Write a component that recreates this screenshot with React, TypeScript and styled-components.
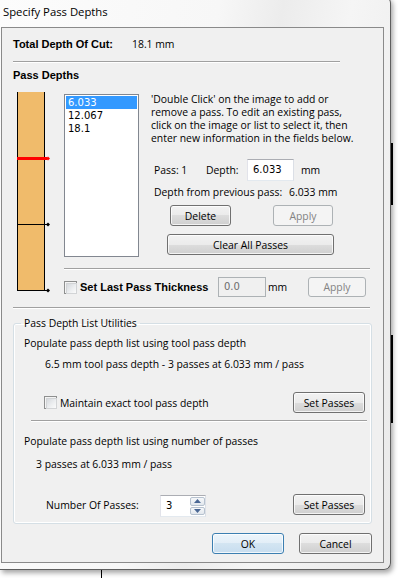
import React from "react";
import styled, { createGlobalStyle } from "styled-components";

const GlobalStyle = createGlobalStyle`
  html, body { margin: 0; padding: 0; background: #ffffff; overflow: hidden; }
  #root { width: 398px; height: 578px; }
  * { box-sizing: border-box; }
`;

const UI = `"Open Sans", "Noto Sans", sans-serif`;
const TAHOMA = `"DejaVu Sans", "Liberation Sans", sans-serif`;
const BOLD = `"Liberation Sans", Arial, sans-serif`;

const Desktop = styled.div`
  position: relative;
  width: 398px;
  height: 578px;
  overflow: hidden;
  background: #ffffff;
`;

const BackdropLine = styled.div<{ $x: number; $y: number; $w: number; $h: number }>`
  position: absolute;
  left: ${(p) => p.$x}px;
  top: ${(p) => p.$y}px;
  width: ${(p) => p.$w}px;
  height: ${(p) => p.$h}px;
  background: #000;
`;

const Window = styled.div`
  position: relative;
  z-index: 1;
  width: 391px;
  margin-top: -4px;
  padding: 0 6px 6px 1px;
  border-top: 1px solid #6b6b6b;
  border-right: 1px solid #5e5e5e;
  border-bottom: 1px solid #5e5e5e;
  border-radius: 0 7px 7px 0;
  background: linear-gradient(100deg, #fcfcfc 0%, #f7f7f7 45%, #ececec 58%, #f5f5f5 72%, #e9e9e9 100%);
  box-shadow: 2px 3px 5px rgba(0, 0, 0, 0.35);
`;

const TitleBar = styled.div`
  height: 30px;
  padding: 7px 0 0 2px;
  font-family: ${UI};
  font-size: 11.3px;
  line-height: 16px;
  color: #000;
`;

const Panel = styled.div`
  height: 536px;
  border: 1px solid #8a8a8a;
  background: #f0f0f0;
  padding: 9px 11px 0 11px;
  display: flex;
  flex-direction: column;
  font-family: ${UI};
  font-size: 10.4px;
  color: #000;
`;

const TotalRow = styled.div`
  display: flex;
  align-items: center;
  height: 14px;
  line-height: 14px;
`;

const BoldLabel = styled.span<{ $width?: number }>`
  font-family: ${BOLD};
  font-weight: bold;
  font-size: 11px;
  line-height: 14px;
  white-space: nowrap;
  ${(p) => (p.$width ? `width: ${p.$width}px; flex: none;` : "")}
`;

const Text = styled.span<{ $width?: number }>`
  line-height: 14px;
  white-space: nowrap;
  ${(p) => (p.$width ? `width: ${p.$width}px; flex: none;` : "")}
`;

const Rule = styled.div<{ $top: number; $left?: number; $width: number }>`
  flex: none;
  margin-top: ${(p) => p.$top}px;
  margin-left: ${(p) => p.$left ?? 0}px;
  width: ${(p) => p.$width}px;
  height: 2px;
  border-top: 1px solid #a0a0a0;
  border-bottom: 1px solid #ffffff;
`;

const SectionTitle = styled.div`
  margin-top: 5px;
  height: 14px;
`;

const MainArea = styled.div`
  display: flex;
  margin-top: 10px;
`;

const Graphic = styled.svg`
  display: block;
  flex: none;
  margin-left: 4px;
`;

const RightColumn = styled.div`
  display: flex;
  flex-direction: column;
  margin-left: 14px;
  width: 308px;
`;

const TopRow = styled.div`
  display: flex;
  align-items: flex-start;
`;

const ListBox = styled.div`
  flex: none;
  margin-top: 2px;
  width: 75px;
  height: 163px;
  border: 1px solid #828790;
  background: #fff;
  padding: 1px;
`;

const ListItem = styled.div<{ $selected?: boolean }>`
  height: 13px;
  line-height: 13px;
  padding-left: 2px;
  font-family: ${TAHOMA};
  font-size: 10px;
  color: ${(p) => (p.$selected ? "#fff" : "#000")};
  background: ${(p) => (p.$selected ? "#3399ff" : "transparent")};
`;

const Info = styled.div`
  display: flex;
  flex-direction: column;
  margin-left: 12px;
`;

const Description = styled.div`
  margin-top: 1px;
  line-height: 13px;
  white-space: nowrap;
`;

const DescLine = styled.div`
  height: 13px;
`;

const PassRow = styled.div`
  display: flex;
  align-items: center;
  height: 22px;
  margin-top: 14px;
  padding-left: 3px;
`;

const TextBox = styled.div<{ $width: number; $height: number; $disabled?: boolean }>`
  flex: none;
  width: ${(p) => p.$width}px;
  height: ${(p) => p.$height}px;
  border: 1px solid;
  border-color: ${(p) => (p.$disabled ? "#adb2b5" : "#abadb3 #dbdfe6 #e3e9ef #e2e3ea")};
  background: ${(p) => (p.$disabled ? "#f0f0f0" : "#ffffff")};
  color: ${(p) => (p.$disabled ? "#6d6d6d" : "#000")};
  font-family: ${TAHOMA};
  font-size: 10px;
  line-height: ${(p) => p.$height - 2}px;
  padding-left: 5px;
`;

const Unit = styled.span<{ $gap: number; $width?: number }>`
  margin-left: ${(p) => p.$gap}px;
  line-height: 14px;
  ${(p) => (p.$width ? `width: ${p.$width}px; flex: none;` : "")}
`;

const DepthFromRow = styled.div`
  display: flex;
  align-items: center;
  height: 14px;
  margin-top: 4px;
  padding-left: 3px;
`;

const ActionRow = styled.div<{ $top: number }>`
  display: flex;
  align-items: flex-start;
  margin-top: ${(p) => p.$top}px;
`;

const Button = styled.div<{ $width: number; $height?: number; $gap?: number; $disabled?: boolean; $default?: boolean }>`
  flex: none;
  display: flex;
  align-items: center;
  justify-content: center;
  width: ${(p) => p.$width}px;
  height: ${(p) => p.$height ?? 21}px;
  margin-left: ${(p) => p.$gap ?? 0}px;
  border-radius: 3px;
  font-family: ${UI};
  font-size: 10.4px;
  line-height: 14px;
  border: 1px solid ${(p) => (p.$disabled ? "#adb2b5" : p.$default ? "#3c7fb1" : "#707070")};
  color: ${(p) => (p.$disabled ? "#838383" : "#000")};
  background: ${(p) =>
    p.$disabled
      ? "#f4f4f4"
      : p.$default
      ? "linear-gradient(#edf5fb 0%, #e2eef7 50%, #d3e5f2 50%, #c7ddef 100%)"
      : "linear-gradient(#f2f2f2 0%, #ebebeb 50%, #dddddd 50%, #cfcfcf 100%)"};
  box-shadow: ${(p) => (p.$disabled ? "none" : "inset 0 0 0 1px rgba(255,255,255,0.75)")};
`;

const PushRight = styled.div`
  margin-left: auto;
`;

const CheckRow = styled.div<{ $top: number; $height: number }>`
  display: flex;
  align-items: center;
  margin-top: ${(p) => p.$top}px;
  height: ${(p) => p.$height}px;
`;

const CheckBox = styled.span<{ $gap?: number }>`
  flex: none;
  display: block;
  width: 13px;
  height: 13px;
  margin-left: ${(p) => p.$gap ?? 0}px;
  margin-right: 3px;
  border: 1px solid #8e8f8f;
  background: #f4f4f4;
  padding: 1px;
  &::after {
    content: "";
    display: block;
    width: 9px;
    height: 9px;
    border: 1px solid #d2d4d6;
    background: linear-gradient(135deg, #d6d9dd 0%, #eceef0 55%, #fbfbfb 100%);
  }
`;

const GroupBox = styled.fieldset`
  margin: 7px 0 0 0;
  width: 359px;
  padding: 6px 6px 6px 10px;
  border: 1px solid #d5dfe5;
  border-radius: 3px;
  box-shadow: inset 0 0 0 1px #ffffff;
  display: flex;
  flex-direction: column;
  min-width: 0;
`;

const GroupTitle = styled.legend`
  padding: 0 3px;
  margin-left: -3px;
  line-height: 14px;
  height: 14px;
`;

const Line = styled.div<{ $top?: number; $indent?: number }>`
  height: 14px;
  line-height: 14px;
  white-space: nowrap;
  margin-top: ${(p) => p.$top ?? 0}px;
  padding-left: ${(p) => p.$indent ?? 0}px;
`;

const NumberRow = styled.div`
  display: flex;
  align-items: flex-start;
  height: 23px;
  margin-top: 23px;
`;

const NumberLabel = styled.span`
  margin: 4px 0 0 22px;
  width: 114px;
  flex: none;
  line-height: 14px;
`;

const SpinBox = styled.div`
  flex: none;
  display: flex;
  margin-top: 1px;
  width: 46px;
  height: 22px;
  border: 1px solid;
  border-color: #abadb3 #dbdfe6 #e3e9ef #e2e3ea;
  background: #fff;
`;

const SpinValue = styled.span`
  flex: 1;
  padding-left: 5px;
  font-family: ${TAHOMA};
  font-size: 10px;
  line-height: 20px;
`;

const SpinButtons = styled.div`
  flex: none;
  display: flex;
  flex-direction: column;
  gap: 1px;
  width: 15px;
  margin: 1px 0 1px 0;
`;

const SpinButton = styled.div`
  flex: 1;
  display: flex;
  align-items: center;
  justify-content: center;
  border: 1px solid #b7c2cf;
  border-radius: 2px;
  background: linear-gradient(#f6f8fa, #e2e7ed);
`;

const DialogButtons = styled.div`
  display: flex;
  justify-content: flex-end;
  gap: 15px;
  margin-top: 9px;
`;

const Marker = ({ y, color }: { y: number; color: string }) => (
  <polygon points={`29,${y} 31,${y - 2} 33,${y} 31,${y + 2}`} fill={color} />
);

const Tri = ({ up }: { up?: boolean }) => (
  <svg width="7" height="4" viewBox="0 0 7 4">
    <polygon points={up ? "0,4 7,4 3.5,0" : "0,0 7,0 3.5,4"} fill="#4a6794" />
  </svg>
);

export default function App() {
  return (
    <Desktop>
      <GlobalStyle />
      <BackdropLine $x={391} $y={143} $w={2} $h={62} />
      <BackdropLine $x={391} $y={335} $w={2} $h={88} />
      <BackdropLine $x={101} $y={570} $w={1} $h={8} />
      <Window>
        <TitleBar>Specify Pass Depths</TitleBar>
        <Panel>
          <TotalRow>
            <BoldLabel $width={119}>Total Depth Of Cut:</BoldLabel>
            <Text>18.1 mm</Text>
          </TotalRow>
          <Rule $top={10} $width={327} />
          <SectionTitle>
            <BoldLabel>Pass Depths</BoldLabel>
          </SectionTitle>
          <MainArea>
            <Graphic width="33" height="201" viewBox="0 0 33 201">
              <rect x="1" y="0" width="27" height="198" fill="#f0bb6b" />
              <line x1="0.5" y1="0" x2="0.5" y2="199" stroke="#000" />
              <line x1="27.5" y1="0" x2="27.5" y2="199" stroke="#000" />
              <line x1="0" y1="198.5" x2="30" y2="198.5" stroke="#000" />
              <line x1="1" y1="132.5" x2="30" y2="132.5" stroke="#000" />
              <rect x="0" y="65" width="30" height="3" fill="#ff0000" />
              <Marker y={66.5} color="#ff0000" />
              <Marker y={132.5} color="#000" />
              <Marker y={198.5} color="#000" />
            </Graphic>
            <RightColumn>
              <TopRow>
                <ListBox>
                  <ListItem $selected>6.033</ListItem>
                  <ListItem>12.067</ListItem>
                  <ListItem>18.1</ListItem>
                </ListBox>
                <Info>
                  <Description>
                    <DescLine>'Double Click' on the image to add or</DescLine>
                    <DescLine>remove a pass. To edit an existing pass,</DescLine>
                    <DescLine>click on the image or list to select it, then</DescLine>
                    <DescLine>enter new information in the fields below.</DescLine>
                  </Description>
                  <PassRow>
                    <Text $width={52}>Pass: 1</Text>
                    <Text $width={41}>Depth:</Text>
                    <TextBox $width={47} $height={22}>6.033</TextBox>
                    <Unit $gap={7}>mm</Unit>
                  </PassRow>
                  <DepthFromRow>
                    <Text $width={135}>Depth from previous pass:</Text>
                    <Text>6.033 mm</Text>
                  </DepthFromRow>
                  <ActionRow $top={6}>
                    <Button $width={61} $gap={19}>Delete</Button>
                    <Button $width={60} $gap={42} $disabled>Apply</Button>
                  </ActionRow>
                  <ActionRow $top={8}>
                    <Button $width={167} $gap={16}>Clear All Passes</Button>
                  </ActionRow>
                </Info>
              </TopRow>
              <Rule $top={11} $width={306} />
              <CheckRow $top={7} $height={20}>
                <CheckBox />
                <BoldLabel $width={138}>Set Last Pass Thickness</BoldLabel>
                <TextBox $width={48} $height={20} $disabled>0.0</TextBox>
                <Unit $gap={2} $width={40}>mm</Unit>
                <Button $width={58} $height={20} $disabled>Apply</Button>
              </CheckRow>
            </RightColumn>
          </MainArea>
          <Rule $top={10} $width={357} />
          <GroupBox>
            <GroupTitle>Pass Depth List Utilities</GroupTitle>
            <Line>Populate pass depth list using tool pass depth</Line>
            <Line $top={7} $indent={21}>6.5 mm tool pass depth - 3 passes at 6.033 mm / pass</Line>
            <CheckRow $top={21} $height={21}>
              <CheckBox $gap={20} />
              <Text>Maintain exact tool pass depth</Text>
              <PushRight>
                <Button $width={72}>Set Passes</Button>
              </PushRight>
            </CheckRow>
            <Rule $top={7} $left={7} $width={336} />
            <Line $top={12}>Populate pass depth list using number of passes</Line>
            <Line $top={9} $indent={12}>3 passes at 6.033 mm / pass</Line>
            <NumberRow>
              <NumberLabel>Number Of Passes:</NumberLabel>
              <SpinBox>
                <SpinValue>3</SpinValue>
                <SpinButtons>
                  <SpinButton><Tri up /></SpinButton>
                  <SpinButton><Tri /></SpinButton>
                </SpinButtons>
              </SpinBox>
              <PushRight>
                <Button $width={72}>Set Passes</Button>
              </PushRight>
            </NumberRow>
          </GroupBox>
          <DialogButtons>
            <Button $width={72} $default>OK</Button>
            <Button $width={73}>Cancel</Button>
          </DialogButtons>
        </Panel>
      </Window>
    </Desktop>
  );
}
